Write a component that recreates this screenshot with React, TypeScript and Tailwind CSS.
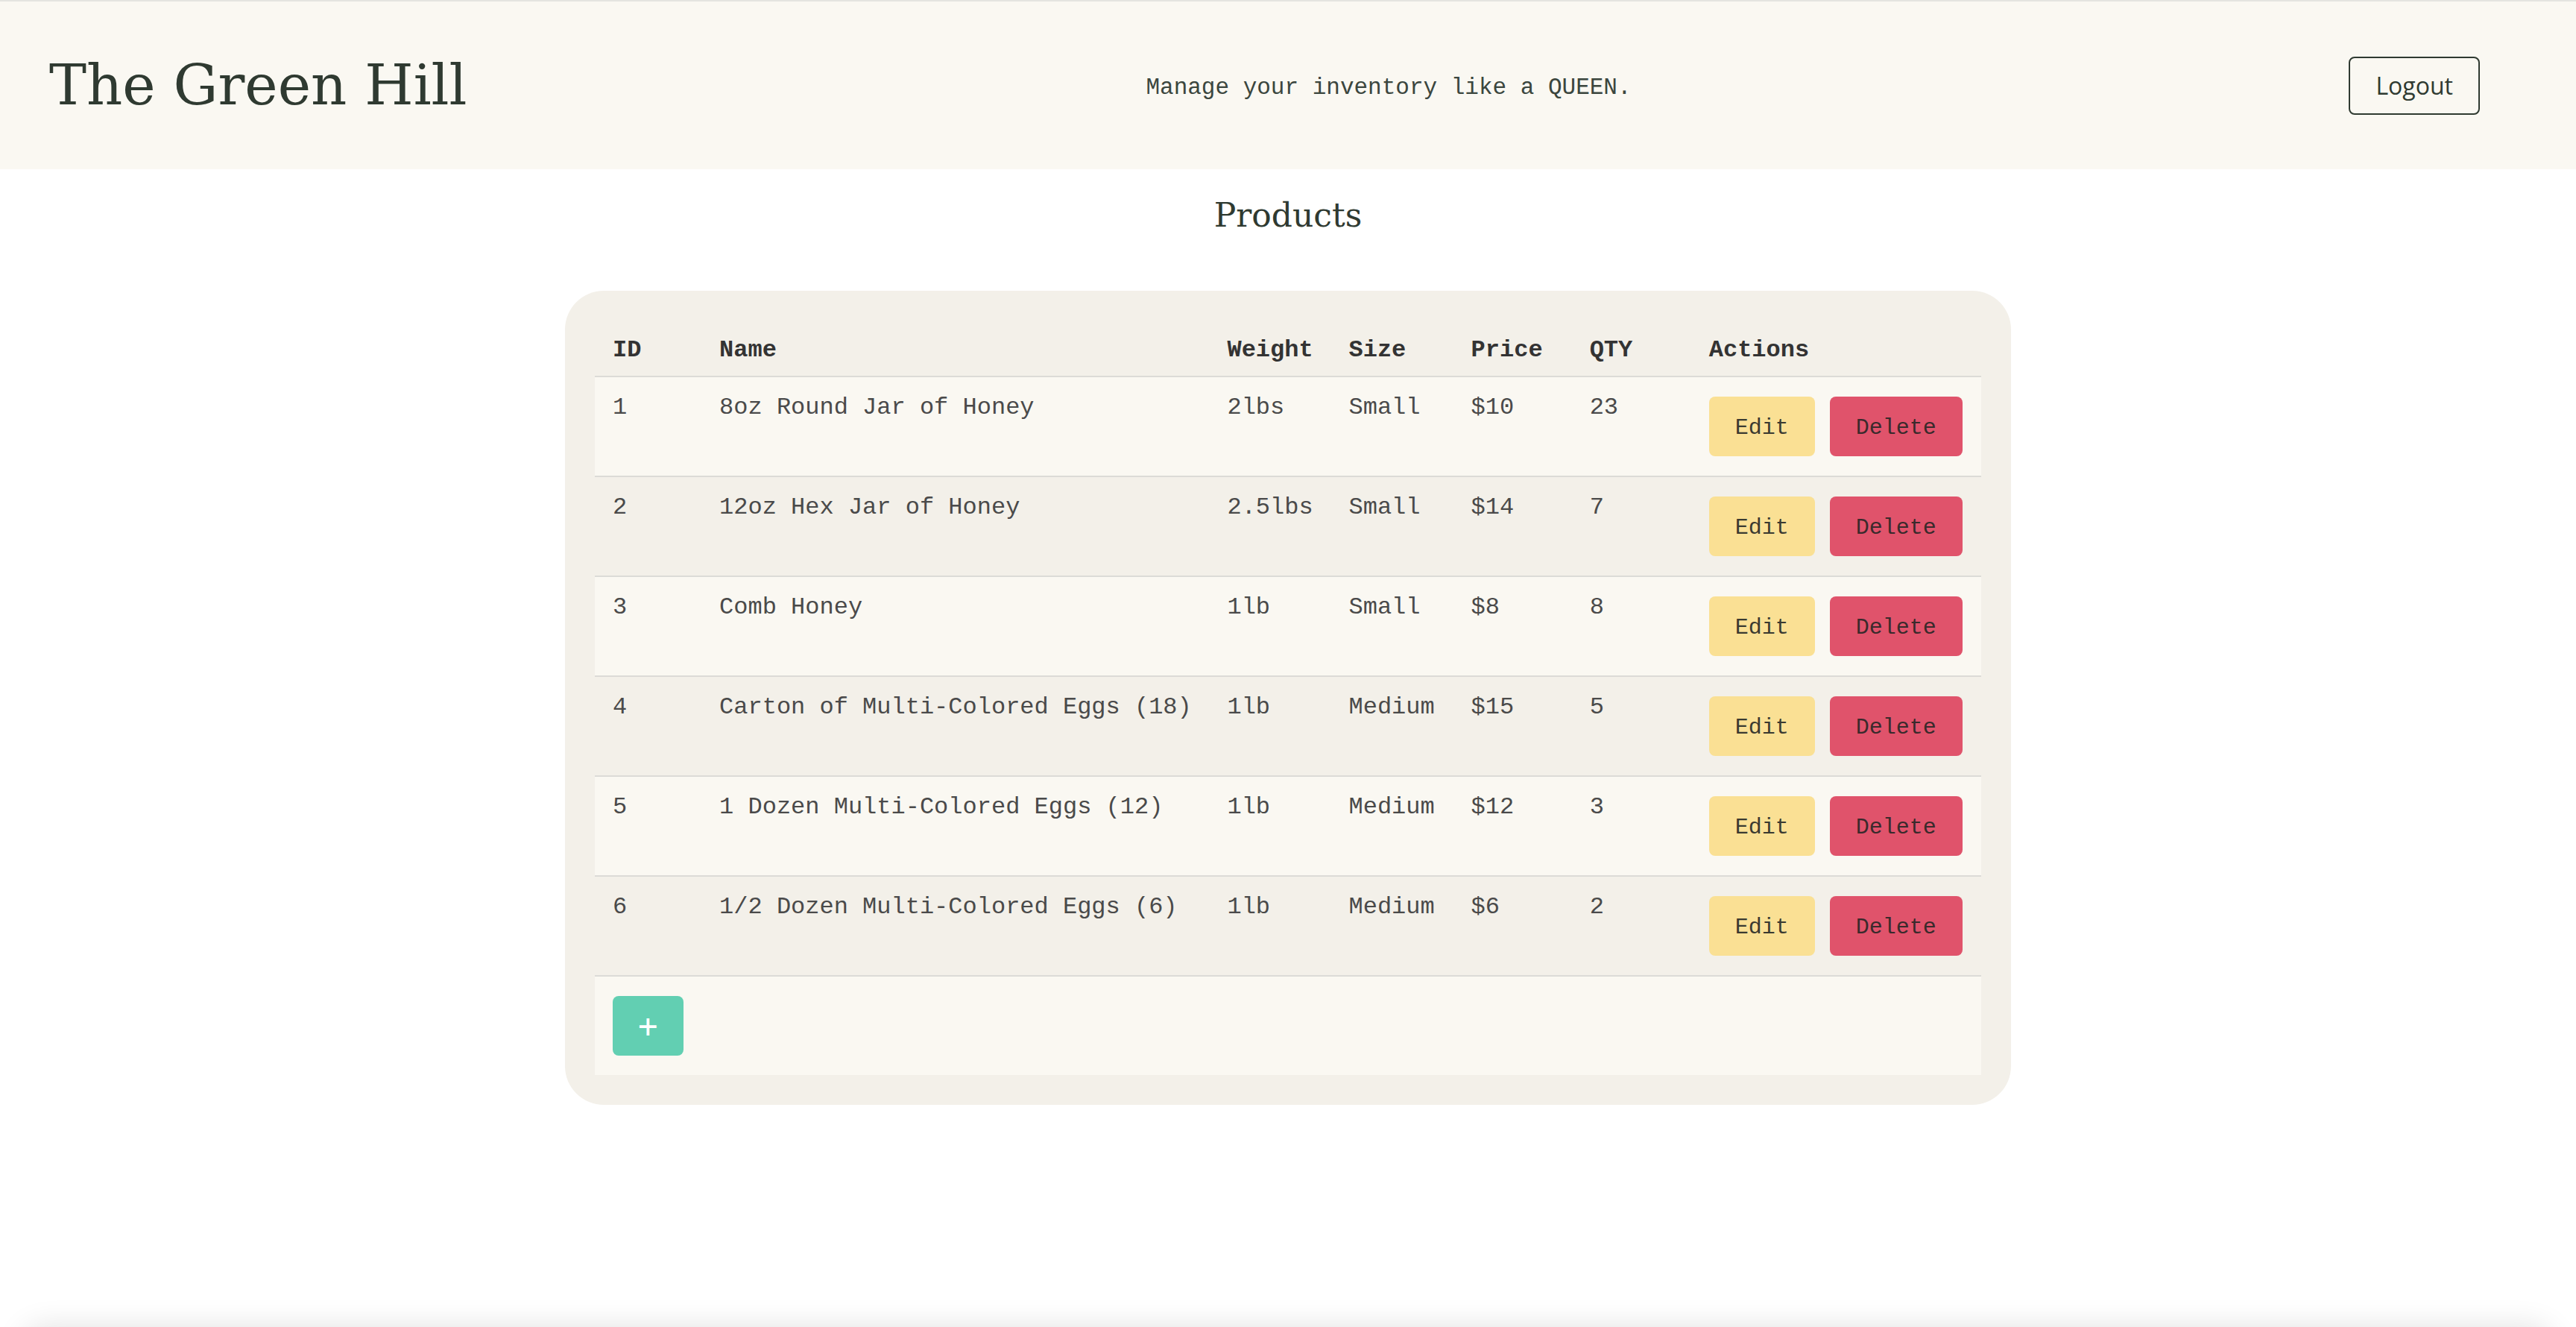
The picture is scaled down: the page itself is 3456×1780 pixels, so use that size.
import React from 'react'

type Product = {
  id: number
  name: string
  weight: string
  size: string
  price: string
  qty: number
}

const products: Product[] = [
  { id: 1, name: '8oz Round Jar of Honey', weight: '2lbs', size: 'Small', price: '$10', qty: 23 },
  { id: 2, name: '12oz Hex Jar of Honey', weight: '2.5lbs', size: 'Small', price: '$14', qty: 7 },
  { id: 3, name: 'Comb Honey', weight: '1lb', size: 'Small', price: '$8', qty: 8 },
  { id: 4, name: 'Carton of Multi-Colored Eggs (18)', weight: '1lb', size: 'Medium', price: '$15', qty: 5 },
  { id: 5, name: '1 Dozen Multi-Colored Eggs (12)', weight: '1lb', size: 'Medium', price: '$12', qty: 3 },
  { id: 6, name: '1/2 Dozen Multi-Colored Eggs (6)', weight: '1lb', size: 'Medium', price: '$6', qty: 2 },
]

const headers = ['ID', 'Name', 'Weight', 'Size', 'Price', 'QTY', 'Actions']

export default function App() {
  return (
    <div className="flex min-h-screen flex-col bg-white font-['Liberation_Mono',monospace] text-[#4a4a4a]">
      {/* Header */}
      <header className="flex h-[227px] items-center justify-between border-t-2 border-[#e4e4e0] bg-[#faf8f2] pl-[66px] pr-[129px]">
        <h1 className="font-['DejaVu_Serif',serif] text-[75px] leading-none text-[#2f3a31]">The Green Hill</h1>
        <p className="mt-[8px] mr-[52px] text-[31px] text-[#3b463e]">Manage your inventory like a QUEEN.</p>
        <button className="rounded-[8px] border-2 border-[#2f3a31] px-[34px] py-[13px] font-['Open_Sans',sans-serif] text-[32px] leading-[48px] text-[#2f3a31]">
          Logout
        </button>
      </header>

      {/* Products */}
      <h2 className="mt-[29px] text-center font-['DejaVu_Serif',serif] text-[44px] leading-[66px] text-[#2f3a31]">
        Products
      </h2>

      <div className="mx-auto mt-[68px] w-[1940px] rounded-[52px] bg-[#f3f0e9] p-[40px]">
        <table className="w-full table-fixed text-[32px] leading-[48px]">
          <colgroup>
            <col className="w-[143px]" />
            <col className="w-[681px]" />
            <col className="w-[163px]" />
            <col className="w-[164px]" />
            <col className="w-[159px]" />
            <col className="w-[160px]" />
            <col className="w-[389px]" />
          </colgroup>
          <thead>
            <tr className="border-b-2 border-[#dcdbd7]">
              {headers.map((h) => (
                <th key={h} className="h-[74px] px-[24px] pt-[16px] pb-[10px] text-left align-top font-bold text-[#333]">
                  {h}
                </th>
              ))}
            </tr>
          </thead>
          <tbody>
            {products.map((p, i) => (
              <tr key={p.id} className={`border-b-2 border-[#dcdbd7] ${i % 2 === 0 ? 'bg-[#faf8f2]' : 'bg-[#f3f0e9]'}`}>
                <td className="px-[24px] pt-[17px] align-top">{p.id}</td>
                <td className="px-[24px] pt-[17px] align-top whitespace-nowrap">{p.name}</td>
                <td className="px-[24px] pt-[17px] align-top">{p.weight}</td>
                <td className="px-[24px] pt-[17px] align-top">{p.size}</td>
                <td className="px-[24px] pt-[17px] align-top">{p.price}</td>
                <td className="px-[24px] pt-[17px] align-top">{p.qty}</td>
                <td className="px-[24px] pt-[26px] pb-[26px] align-top">
                  <div className="flex gap-[20px] text-[30px]">
                    <button className="rounded-[8px] bg-[#fae094] px-[35px] pt-[18px] pb-[14px] text-[#3a3a30]">Edit</button>
                    <button className="rounded-[8px] bg-[#e0536b] px-[35px] pt-[18px] pb-[14px] text-[#3a2a2c]">Delete</button>
                  </div>
                </td>
              </tr>
            ))}
            <tr className="bg-[#faf8f2]">
              <td colSpan={7} className="px-[24px] py-[26px]">
                <button className="rounded-[8px] bg-[#62cfb2] px-[34px] py-[16px] font-['DejaVu_Sans_Mono',monospace] text-[44px] leading-[48px] font-extralight text-white">
                  +
                </button>
              </td>
            </tr>
          </tbody>
        </table>
      </div>

      {/* bottom shadow */}
      <div className="mt-auto h-[40px] overflow-hidden">
        <div className="mx-[30px] mt-[40px] h-[60px] rounded-[40px] shadow-[0_0_40px_rgba(0,0,0,0.12)]" />
      </div>
    </div>
  )
}
